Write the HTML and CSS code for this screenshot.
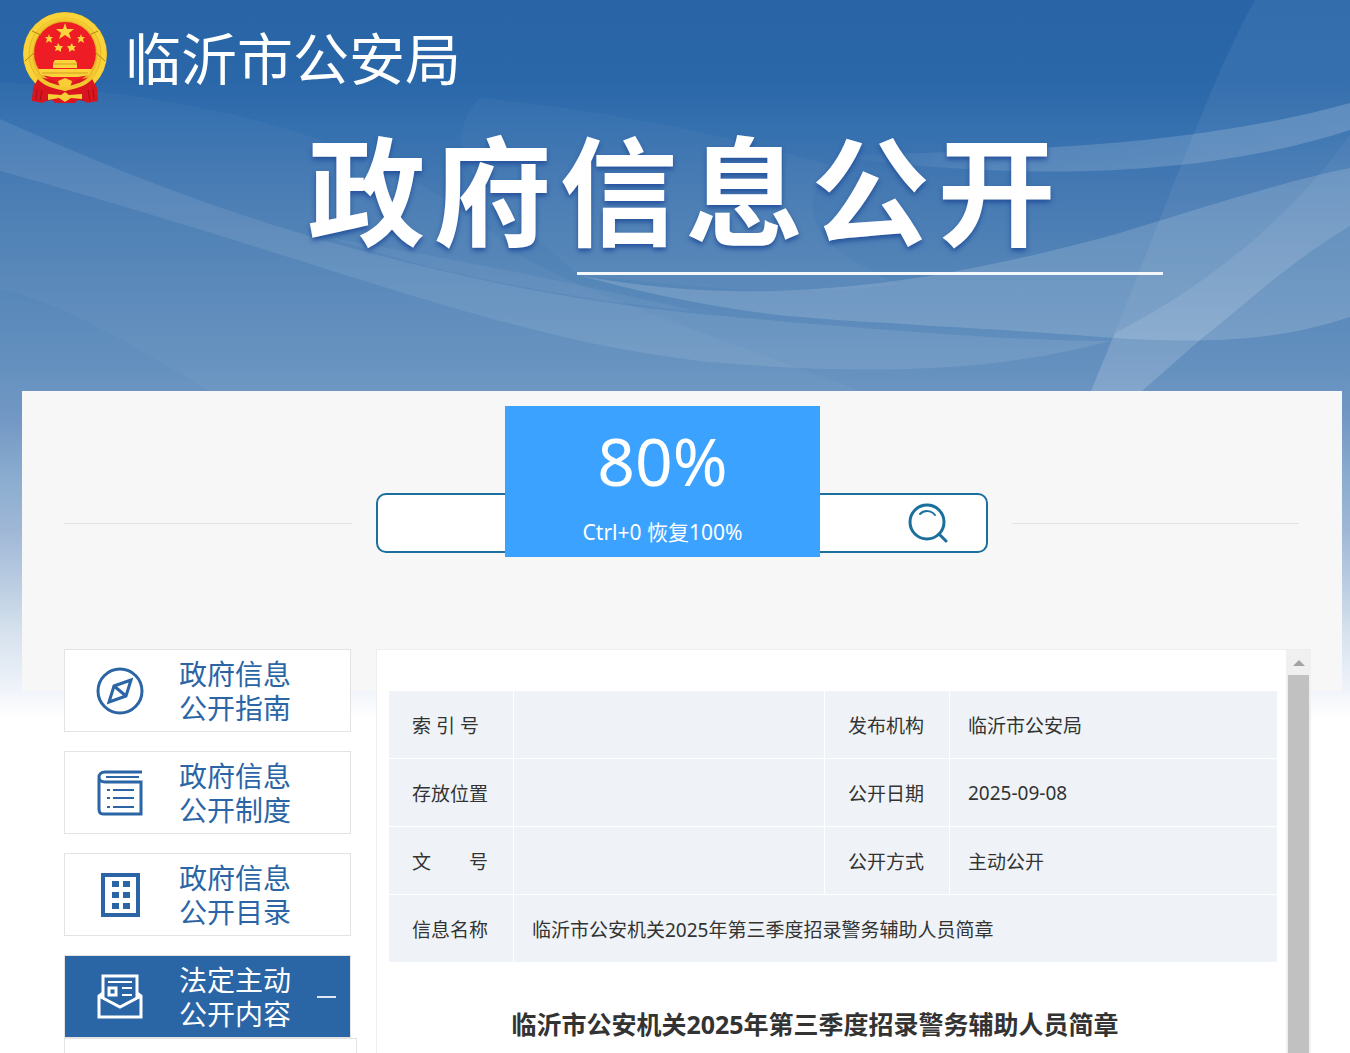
FILE: index.html
```html
<!DOCTYPE html>
<html lang="zh-CN">
<head>
  <meta charset="UTF-8" />
  <meta name="viewport" content="width=device-width, initial-scale=1.0"/>
  <title>临沂市公安局 政府信息公开</title>
  <link rel="stylesheet" href="styles.css">
</head>
<body>
<div class="page">

  <svg class="waves" viewBox="0 0 1350 391" preserveAspectRatio="none" aria-hidden="true">
    <defs>
      <linearGradient id="fadeLeft" x1="0" x2="1" y1="0" y2="0">
        <stop offset="0" stop-color="#fff" stop-opacity="0"/>
        <stop offset=".4" stop-color="#fff" stop-opacity=".14"/>
        <stop offset="1" stop-color="#fff" stop-opacity=".18"/>
      </linearGradient>
      <linearGradient id="fadeDown" x1="0" x2="0" y1="0" y2="1">
        <stop offset="0" stop-color="#fff" stop-opacity=".04"/>
        <stop offset="1" stop-color="#fff" stop-opacity=".12"/>
      </linearGradient>
    </defs>
    <!-- left ribbon -->
    <path fill="#fff" fill-opacity=".09" d="M0 119C110 168 210 208 330 242C450 275 560 300 700 314C880 330 1000 340 1110 341C1000 372 860 376 700 361C500 338 330 262 0 171Z"/>
    <path fill="#fff" fill-opacity=".03" d="M0 82C250 100 400 150 520 255C600 300 700 330 860 391L210 391C140 350 60 300 0 290Z"/>
    <path fill="#fff" fill-opacity=".05" d="M330 238C450 258 560 280 700 312C620 304 470 285 330 238Z"/>
    <path fill="#fff" fill-opacity=".03" d="M480 98C600 110 700 128 830 165C780 230 850 260 900 285C760 300 640 280 578 275C520 220 420 160 480 98Z"/>
    <!-- upper right ribbon -->
    <path fill="url(#fadeLeft)" d="M830 156C1000 150 1180 150 1350 103L1350 130C1220 172 1050 185 830 156Z"/>
    <!-- lower ribbon -->
    <path fill="#fff" fill-opacity=".15" d="M578 275C760 310 930 285 1120 233C1200 208 1290 180 1350 168L1350 317C1280 340 1210 345 1100 337C960 326 840 322 770 314C700 305 640 292 578 275Z"/>
    <!-- slanted beam -->
    <path fill="url(#fadeDown)" d="M1350 226C1290 262 1250 300 1200 340L1142 391L1091 391L1115 333C1200 290 1290 220 1350 135Z"/>
    <path fill="#fff" fill-opacity=".06" d="M1255 0C1210 80 1170 200 1091 391L1142 391L1200 340C1250 300 1290 262 1350 226L1350 0Z"/>
  </svg>

  <header class="site-header">
    <a href="#" class="brand">
      <svg class="emblem" viewBox="0 0 84 92" aria-hidden="true">
        <path fill="#c9151e" d="M13 64L9 88L20 90L28 88L36 91L48 91L56 88L64 90L75 88L71 64Z"/>
        <ellipse cx="42" cy="42" rx="42" ry="42" fill="#e9b625"/>
        <ellipse cx="42" cy="42" rx="39" ry="39" fill="none" stroke="#f8d43a" stroke-width="5"/>
        <ellipse cx="42" cy="42" rx="34" ry="35" fill="none" stroke="#f4cb33" stroke-width="3"/>
        <circle cx="42" cy="41" r="31" fill="#ee1c25"/>
        <path fill="none" stroke="#b98312" stroke-width="1" d="M2 49L12 40M82 49L72 40M9 19L18 23M75 19L66 23"/>
        <g fill="#fbd43c">
          <path d="M42 11L44 17H51L46 21L48 27L42 23L36 27L38 21L33 17H40Z"/>
          <path d="M26 22L27 25H30L28 27L29 31L26 29L23 31L24 27L22 25H25Z"/>
          <path d="M58 22L59 25H62L60 27L61 31L58 29L55 31L56 27L54 25H57Z"/>
          <path d="M35 31L37 34L40 34L38 37L38 40L35 38L32 39L33 36L31 34L34 34Z"/>
          <path d="M49 31L50 34L53 34L51 36L52 39L49 38L46 40L46 37L44 34L47 34Z"/>
          <path d="M32 48H52L54 51V56H30V51Z"/>
        </g>
        <path fill="#d9151f" d="M16 65L30 68L42 76L54 68L68 65L74 76L75 89L64 91L58 84L52 91H32L26 84L20 91L9 89L10 76Z"/>
        <path fill="#fbd43c" d="M15 57H69L66 63L55 65H29L18 63Z"/>
        <path stroke="#d49b1d" stroke-width="1" d="M30 52H54M19 61H65"/>
        <path fill="none" stroke="#f3c530" stroke-width="4" d="M13 62C22 74 32 74 42 77C52 74 62 74 71 62"/>
        <path fill="#f8ce36" d="M42 66L49 69L47 75H37L35 69ZM25 82L38 83L42 80L46 83L59 82V87L48 86L42 90L36 86L25 88Z"/>
        <path stroke="#a50e17" stroke-width="1" d="M14 77L13 88M19 78L17 89M70 77L71 88M65 78L67 89"/>
      </svg>
      <span class="brand-name">临沂市公安局</span>
    </a>
    <h1 class="banner-title">
      <span>政</span><span>府</span><span>信</span><span>息</span><span>公</span><span>开</span>
    </h1>
    <div class="banner-line"></div>
  </header>

  <div class="portal">
    <form class="search-row" role="search">
      <span class="search-rule"></span>
      <div class="search-box">
        <input type="text" class="search-input" aria-label="搜索">
        <button type="button" class="search-btn" aria-label="搜索">
          <svg viewBox="0 0 40 40" width="40" height="40" fill="none" stroke="#1a6f9c" stroke-linecap="round">
            <circle cx="19" cy="19" r="17" stroke-width="3"/>
            <path stroke-width="2" d="M12 11C16 7 23 7 27 12"/>
            <path stroke-width="3" d="M31 31L38 38"/>
          </svg>
        </button>
      </div>
      <span class="search-rule"></span>
    </form>

    <div class="columns">
      <nav class="side-nav">
        <a href="#" class="nav-item">
          <svg class="nav-icon" viewBox="0 0 48 48" fill="none" stroke="currentColor">
            <circle cx="24" cy="24" r="22" stroke-width="3"/>
            <path stroke-width="3" d="M35 13L30 29L13 35L18 19ZM18 19L30 29"/>
          </svg>
          <span class="nav-text">政府信息<br>公开指南</span>
        </a>
        <a href="#" class="nav-item">
          <svg class="nav-icon" viewBox="0 0 48 48" fill="none" stroke="currentColor">
            <path stroke-width="3" d="M46 3H9C1 3 1 13 9 13H45V45H7C4 45 3 43 3 40V8"/>
            <path stroke-width="2" d="M10 8H43M17 21H38M17 29H38M17 38H38M11 21H14M11 29H14M11 38H14"/>
          </svg>
          <span class="nav-text">政府信息<br>公开制度</span>
        </a>
        <a href="#" class="nav-item">
          <svg class="nav-icon" viewBox="0 0 48 48" fill="none" stroke="currentColor">
            <rect x="7" y="4" width="35" height="40" stroke-width="4"/>
            <path stroke-width="6" d="M16 13H23M27 13H34M16 24H23M27 24H34M16 35H23M27 35H34"/>
          </svg>
          <span class="nav-text">政府信息<br>公开目录</span>
        </a>
        <a href="#" class="nav-item active">
          <svg class="nav-icon" viewBox="0 0 48 48" fill="none" stroke="currentColor" stroke-width="3">
            <path d="M7 26V3H41V26"/>
            <path d="M7 20L3 23V44H45V23L41 20M3 23L24 34L45 23"/>
            <path stroke-width="2" d="M12 9H36M26 15H36M26 22H36"/>
            <rect x="13" y="15" width="7" height="7"/>
          </svg>
          <span class="nav-text">法定主动<br>公开内容</span>
          <span class="nav-toggle"></span>
        </a>
        <div class="sub-nav"></div>
      </nav>

      <main class="content">
        <article class="article">
          <table class="info-table">
            <colgroup>
              <col class="col-label"><col class="col-wide"><col class="col-label"><col>
            </colgroup>
            <tr>
              <th scope="row">索 引 号</th><td></td>
              <th scope="row">发布机构</th><td>临沂市公安局</td>
            </tr>
            <tr>
              <th scope="row">存放位置</th><td></td>
              <th scope="row">公开日期</th><td>2025-09-08</td>
            </tr>
            <tr>
              <th scope="row">文&emsp;&emsp;号</th><td></td>
              <th scope="row">公开方式</th><td>主动公开</td>
            </tr>
            <tr>
              <th scope="row">信息名称</th><td colspan="3">临沂市公安机关2025年第三季度招录警务辅助人员简章</td>
            </tr>
          </table>
          <h2 class="article-title">临沂市公安机关2025年第三季度招录警务辅助人员简章</h2>
        </article>
        <div class="scrollbar" aria-hidden="true">
          <svg class="scroll-arrow" viewBox="0 0 12 6"><path fill="#a3a3a3" d="M6 0L12 6H0Z"/></svg>
          <div class="scroll-thumb"></div>
        </div>
      </main>
    </div>
  </div>

  <div class="zoom-tip" role="status">
    <strong class="zoom-value">80%</strong>
    <span class="zoom-hint">Ctrl+0 恢复100%</span>
  </div>

</div>
</body>
</html>
```
FILE: styles.css
```css
* {
  box-sizing: border-box;
}

body {
  margin: 0;
  font-family: "Noto Sans", "Noto Sans CJK SC", sans-serif;
  color: #333;
  background: #fff;
}

a {
  color: inherit;
  text-decoration: none;
}

.page {
  position: relative;
  display: flex;
  flex-direction: column;
  height: 100vh;
  overflow: hidden;
  background: linear-gradient(#2864a6 0, #2a67a9 80px, #3570af 130px, #4579b2 190px, #5586b8 280px, #6591bf 370px, #7398c5 420px, #8badcf 480px, #9fb7d6 530px, #b8cbe1 580px, #d5e1ed 630px, #ebf0f8 680px, #fff 720px);
}

.waves {
  position: absolute;
  top: 0;
  left: 0;
  width: 100%;
  height: 391px;
}

/* header */
.site-header {
  position: relative;
  height: 391px;
  flex-shrink: 0;
  padding: 12px 10px 0 23px;
  color: #fff;
}

.brand {
  display: flex;
  align-items: center;
  gap: 18px;
}

.emblem {
  width: 84px;
  height: 92px;
}

.brand-name {
  font-size: 56px;
  line-height: 92px;
}

.banner-title {
  display: flex;
  justify-content: center;
  gap: 8px;
  margin: 20px 0 0;
  font-size: 118px;
  font-weight: bold;
  line-height: 136px;
  text-shadow: 0 3px 5px #24509b;
}

.banner-line {
  width: 586px;
  height: 3px;
  margin: 12px 177px 0 auto;
  background: #f4f8fd;
}

/* grey sheet behind search box and top of columns */
.portal {
  position: relative;
  display: flex;
  flex-direction: column;
  flex: 1;
  min-height: 0;
  margin: 0 8px 0 22px;
  padding: 102px 31px 0 42px;
  background: linear-gradient(#f7f7f7, #f7f7f7) no-repeat top / 100% 300px;
}

.search-row {
  display: flex;
  align-items: center;
  gap: 24px;
  padding-right: 12px;
}

.search-rule {
  flex: 1;
  height: 1px;
  background: #e2e2e2;
}

.search-box {
  display: flex;
  align-items: center;
  width: 612px;
  height: 60px;
  padding-right: 38px;
  background: #fff;
  border: 2px solid #1a6f9c;
  border-radius: 10px;
}

.search-input {
  flex: 1;
  height: 100%;
  padding: 0 16px;
  border: none;
  outline: none;
  background: none;
  font: inherit;
  font-size: 20px;
}

.search-btn {
  display: flex;
  padding: 0;
  border: none;
  background: none;
  cursor: pointer;
}

/* columns */
.columns {
  display: flex;
  gap: 25px;
  flex: 1;
  min-height: 0;
  margin-top: 96px;
}

.side-nav {
  width: 287px;
  flex-shrink: 0;
}

.nav-item {
  display: flex;
  align-items: center;
  height: 83px;
  margin-bottom: 19px;
  padding-left: 31px;
  background: #fff;
  border: 1px solid #e3e3e3;
  color: #2b65a5;
}

.nav-item.active {
  margin-bottom: 0;
  background: #2a65a6;
  color: #fff;
}

.nav-icon {
  width: 48px;
  height: 48px;
}

.nav-text {
  margin-left: 35px;
  font-size: 28px;
  line-height: 34px;
}

.nav-toggle {
  width: 19px;
  height: 2px;
  margin-left: 26px;
  background: #dfe8f2;
}

.sub-nav {
  width: 293px;
  height: 100px;
  background: #fff;
  border: 1px solid #e3e3e3;
}

.content {
  display: flex;
  flex: 1;
  min-width: 0;
  background: #fff;
  border: solid #eee;
  border-width: 1px 0 0 1px;
}

.article {
  flex: 1;
  padding: 41px 9px 0 12px;
}

.info-table {
  width: 100%;
  table-layout: fixed;
  border-spacing: 0;
  background: #eff3f7;
  font-size: 19px;
}

.col-label {
  width: 125px;
}

.col-wide {
  width: 311px;
}

.info-table th,
.info-table td {
  height: 68px;
  padding: 0 0 0 18px;
  border: solid #fff;
  border-width: 0 1px 1px 0;
  text-align: left;
  font-weight: normal;
}

.info-table th {
  padding-left: 23px;
}

.info-table td:last-child {
  border-right: none;
}

.article-title {
  margin: 43px 36px 0 0;
  font-size: 25px;
  line-height: 36px;
  text-align: center;
}

.scrollbar {
  display: flex;
  flex-direction: column;
  align-items: center;
  width: 25px;
  padding: 10px 2px 0;
  background: #f0f0f0;
}

.scroll-arrow {
  width: 12px;
  height: 6px;
  margin-bottom: 9px;
}

.scroll-thumb {
  flex: 1;
  width: 100%;
  background: #c1c1c1;
}

/* browser zoom notice */
.zoom-tip {
  position: absolute;
  top: 406px;
  left: 505px;
  display: flex;
  flex-direction: column;
  align-items: center;
  width: 315px;
  height: 151px;
  padding-top: 14px;
  background: #3ba3ff;
  color: #fff;
}

.zoom-value {
  font-size: 66px;
  font-weight: normal;
  line-height: 80px;
}

.zoom-hint {
  margin-top: 18px;
  font-size: 21px;
  line-height: 28px;
}
```
